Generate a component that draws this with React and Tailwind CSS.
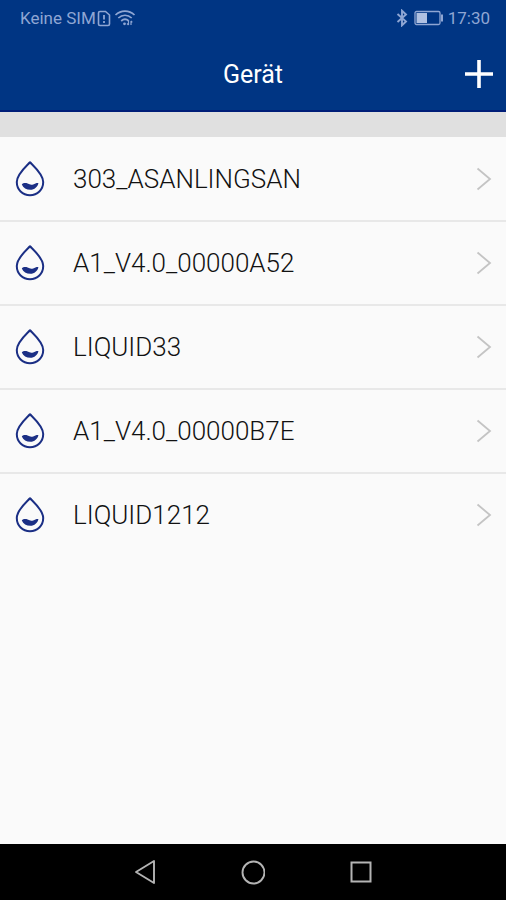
const DEVICES = [
  '303_ASANLINGSAN',
  'A1_V4.0_00000A52',
  'LIQUID33',
  'A1_V4.0_00000B7E',
  'LIQUID1212'
];

function DropIcon() {
  return (
    <svg width="30" height="36" viewBox="0 0 30 36" fill="none" className="shrink-0" aria-hidden="true">
      <path
        d="M15 1.2C11.5 5 1.8 13 1.8 21C1.8 28.6 7.6 34.2 15 34.2C22.4 34.2 28.2 28.6 28.2 21C28.2 13 18.5 5 15 1.2Z"
        stroke="#1b2f85"
        strokeWidth="2"
        strokeLinejoin="round"
      />
      <path
        d="M6.8 23.4C8 22.2 10.4 21.6 12.6 22.6C14.6 23.6 16.2 24.2 18.2 23.4C20 22.6 21.4 21.8 23.4 22C22.8 25.8 19.4 28.8 15.4 28.8C11.4 28.8 8.2 26.8 6.8 23.4Z"
        fill="#1b2f85"
      />
    </svg>
  );
}

function StatusBar() {
  return (
    <div className="flex h-9 items-center justify-between pl-5 pr-4 text-[17px] leading-9 text-[#8fa6d3]">
      <div className="flex items-center gap-px">
        <span>Keine SIM</span>
        <svg width="14" height="17" viewBox="0 0 14 17" fill="none" stroke="currentColor" strokeWidth="1.6" aria-hidden="true">
          <path d="M3 1.5H8.5L12.5 5V14Q12.5 15.5 11 15.5H3Q1.5 15.5 1.5 14V3Q1.5 1.5 3 1.5Z" />
          <path d="M7 5V9.5M7 11V13" strokeWidth="1.8" />
        </svg>
        <svg width="22" height="18" viewBox="0 0 22 18" fill="none" stroke="currentColor" strokeWidth="1.7" className="ml-0.5" aria-hidden="true">
          <path d="M1.5 6C7 0.8 15 0.8 20.5 6M4.3 9C8.3 5.3 13.7 5.3 17.7 9M7.2 12C9.6 9.8 12.4 9.8 14.8 12" />
          <circle cx="10.5" cy="14.8" r="1.4" fill="currentColor" stroke="none" />
          <path d="M14.5 12V16M13 14.5L14.5 16M17 16V12M18.3 13.3L17 12" strokeWidth="1.2" />
        </svg>
      </div>
      <div className="flex items-center">
        <svg width="12" height="18" viewBox="0 0 12 18" fill="none" stroke="currentColor" strokeWidth="1.9" aria-hidden="true">
          <path d="M1.5 5L10 12.5L6 16.3V1.7L10 5.5L1.5 13" />
        </svg>
        <svg width="30" height="16" viewBox="0 0 30 16" fill="none" className="ml-1.5 mr-1" aria-hidden="true">
          <rect x="1" y="1.5" width="25" height="13" rx="1.5" stroke="currentColor" strokeWidth="1.3" />
          <rect x="2.5" y="3" width="10.5" height="10" fill="#b0c1e2" />
          <rect x="27" y="4.5" width="2" height="7" fill="currentColor" />
        </svg>
        <span>17:30</span>
      </div>
    </div>
  );
}

function DeviceRow({ name }) {
  return (
    <li className="border-b-2 border-[#e8e8e8] last:border-transparent">
      <button type="button" className="flex h-[82px] w-full items-center pl-[15px] pr-3.5 text-left">
        <DropIcon />
        <span className="ml-7 flex-1 text-[26px] font-light leading-8 text-[#111111]">{name}</span>
        <svg width="16" height="24" viewBox="0 0 16 24" fill="none" stroke="#c4c4c4" strokeWidth="1.8" aria-hidden="true">
          <path d="M1.5 1.5L14 12L1.5 22.5" />
        </svg>
      </button>
    </li>
  );
}

function NavBar() {
  return (
    <nav className="flex h-14 items-center justify-center gap-[84px] bg-black text-[#b4b4b4]">
      <button type="button" aria-label="Zurück">
        <svg width="24" height="26" viewBox="0 0 24 26" fill="none" stroke="currentColor" strokeWidth="1.9" strokeLinejoin="round">
          <path d="M21 2V24L3 13Z" />
        </svg>
      </button>
      <button type="button" aria-label="Startseite">
        <svg width="24" height="26" viewBox="0 0 24 26" fill="none" stroke="currentColor" strokeWidth="1.9">
          <circle cx="12.5" cy="13.5" r="11" />
        </svg>
      </button>
      <button type="button" aria-label="Übersicht">
        <svg width="24" height="26" viewBox="0 0 24 26" fill="none" stroke="currentColor" strokeWidth="2">
          <rect x="2.5" y="3.5" width="19" height="19" />
        </svg>
      </button>
    </nav>
  );
}

export default function App() {
  return (
    <div className="flex min-h-screen flex-col bg-[#fafafa] font-[Roboto,sans-serif]">
      <header className="border-b-2 border-[#001e78] bg-[#003583]">
        <StatusBar />
        <div className="grid h-[74px] grid-cols-[1fr_auto_1fr] items-center px-3 pt-1">
          <h1 className="col-start-2 text-[25px] leading-8 text-white">Gerät</h1>
          <button type="button" aria-label="Gerät hinzufügen" className="justify-self-end">
            <svg width="30" height="30" viewBox="0 0 30 30" fill="none" stroke="#ffffff" strokeWidth="3.6">
              <path d="M15 0V28M1 14H29" />
            </svg>
          </button>
        </div>
      </header>
      <main className="flex-1 border-t-[25px] border-[#e0e0e0]">
        <ul className="pt-px">
          {DEVICES.map(name => (
            <DeviceRow key={name} name={name} />
          ))}
        </ul>
      </main>
      <NavBar />
    </div>
  );
}
